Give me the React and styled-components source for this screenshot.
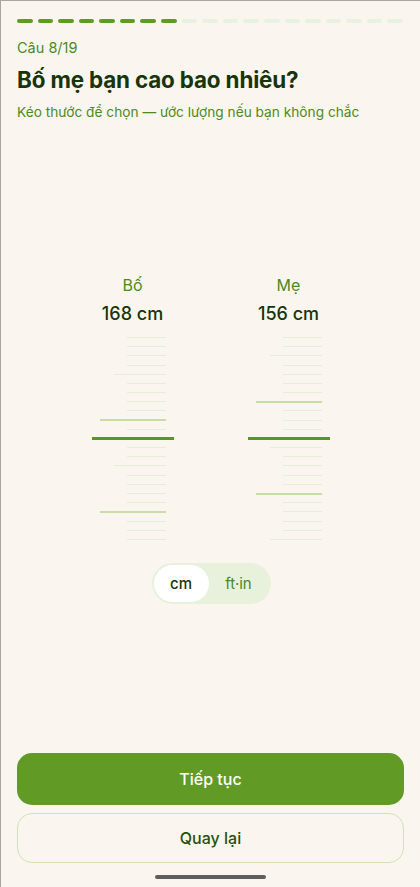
import React from "react";
import styled, { createGlobalStyle, css } from "styled-components";

const GlobalStyle = createGlobalStyle`
  html, body {
    margin: 0;
    padding: 0;
    background: #faf6ef;
  }
  * { box-sizing: border-box; }
`;

const Screen = styled.div`
  position: relative;
  width: 420px;
  height: 887px;
  background: #faf6ef;
  border-left: 1px solid #a8a6a2;
  border-top: 1px solid #a8a6a2;
  font-family: Inter, "Noto Sans", sans-serif;
  display: flex;
  flex-direction: column;
  overflow: hidden;
`;

const Header = styled.div`
  padding: 18px 16px 0 16px;
`;

const Progress = styled.div`
  display: flex;
  gap: 5px;
  width: 386px;
`;

const Segment = styled.div`
  flex: 1;
  height: 4px;
  border-radius: 2px;
  background: ${(p) => (p.done ? "#5f9a24" : "#e9f1df")};
`;

const StepLabel = styled.div`
  margin-top: 16px;
  font-size: 14.5px;
  line-height: 18px;
  color: #4d8a1d;
`;

const Title = styled.h1`
  margin: 9px 0 0;
  font-size: 22.4px;
  line-height: 28px;
  font-weight: 700;
  color: #173509;
  letter-spacing: -0.15px;
`;

const Subtitle = styled.p`
  margin: 9px 0 0;
  font-size: 13.7px;
  line-height: 18px;
  color: #4d8a1d;
`;

const Rulers = styled.div`
  margin-top: 154px;
  display: flex;
  justify-content: center;
  gap: 74px;
`;

const Column = styled.div`
  width: 82px;
  display: flex;
  flex-direction: column;
  align-items: center;
`;

const Label = styled.div`
  font-size: 16px;
  line-height: 20px;
  color: #4d8a1d;
`;

const Value = styled.div`
  margin-top: 8px;
  font-size: 18px;
  line-height: 22px;
  font-weight: 500;
  color: #173509;
`;

const Scale = styled.div`
  margin-top: 8px;
  width: 82px;
  display: flex;
  flex-direction: column;
`;

const TickRow = styled.div`
  height: 9.18px;
  display: flex;
  align-items: center;
  justify-content: flex-end;
  padding-right: ${(p) => (p.kind === "sel" ? 0 : 8)}px;
`;

const Tick = styled.div`
  ${(p) =>
    p.kind === "sel" &&
    css`
      width: 82px;
      height: 3px;
      background: #5b961f;
    `}
  ${(p) =>
    p.kind === "long" &&
    css`
      width: 66px;
      height: 2px;
      background: #c6dda6;
    `}
  ${(p) =>
    p.kind === "mid" &&
    css`
      width: 52px;
      height: 1px;
      background: #e6eedb;
    `}
  ${(p) =>
    p.kind === "short" &&
    css`
      width: 39px;
      height: 1px;
      background: #e6eedb;
    `}
`;

const Toggle = styled.div`
  align-self: center;
  margin-top: 19px;
  margin-left: 1px;
  width: 119px;
  height: 41px;
  padding: 2px;
  border-radius: 21px;
  background: #e8f1dc;
  display: flex;
`;

const ToggleOption = styled.div`
  flex: 1;
  display: flex;
  align-items: center;
  justify-content: center;
  border-radius: 19px;
  font-size: 15px;
  font-weight: ${(p) => (p.active ? 500 : 400)};
  color: ${(p) => (p.active ? "#173509" : "#4d8a1d")};
  background: ${(p) => (p.active ? "#ffffff" : "transparent")};
  ${(p) => p.active && "flex: 0 0 55px;"}
`;

const Footer = styled.div`
  margin-top: auto;
  padding: 0 16px 8px;
  display: flex;
  flex-direction: column;
  gap: 8px;
`;

const Button = styled.button`
  height: ${(p) => (p.primary ? 52 : 50)}px;
  border-radius: 15px;
  font-family: inherit;
  font-size: 16px;
  font-weight: 500;
  cursor: pointer;
  ${(p) =>
    p.primary
      ? css`
          background: #629a26;
          color: #ffffff;
          border: none;
        `
      : css`
          background: transparent;
          color: #25500c;
          border: 1px solid #cfe3b2;
        `}
`;

const HomeBar = styled.div`
  align-self: center;
  margin-top: 4px;
  width: 111px;
  height: 4px;
  border-radius: 2px;
  background: #5e5e5e;
`;

function tickKind(v, selected) {
  if (v === selected) return "sel";
  if (v % 10 === 0) return "long";
  if (v % 5 === 0) return "mid";
  return "short";
}

const Ruler = ({ label, value }) => {
  const ticks = [];
  for (let v = value + 11; v >= value - 11; v--) ticks.push(v);
  return (
    <Column>
      <Label>{label}</Label>
      <Value>{value} cm</Value>
      <Scale>
        {ticks.map((v) => {
          const kind = tickKind(v, value);
          return (
            <TickRow key={v} kind={kind}>
              <Tick kind={kind} />
            </TickRow>
          );
        })}
      </Scale>
    </Column>
  );
};

export default function App() {
  return (
    <>
      <GlobalStyle />
      <Screen>
        <Header>
          <Progress>
            {Array.from({ length: 19 }).map((_, i) => (
              <Segment key={i} done={i < 8} />
            ))}
          </Progress>
          <StepLabel>Câu 8/19</StepLabel>
          <Title>Bố mẹ bạn cao bao nhiêu?</Title>
          <Subtitle>Kéo thước để chọn — ước lượng nếu bạn không chắc</Subtitle>
        </Header>
        <Rulers>
          <Ruler label="Bố" value={168} />
          <Ruler label="Mẹ" value={156} />
        </Rulers>
        <Toggle>
          <ToggleOption active>cm</ToggleOption>
          <ToggleOption>ft·in</ToggleOption>
        </Toggle>
        <Footer>
          <Button primary>Tiếp tục</Button>
          <Button>Quay lại</Button>
          <HomeBar />
        </Footer>
      </Screen>
    </>
  );
}
